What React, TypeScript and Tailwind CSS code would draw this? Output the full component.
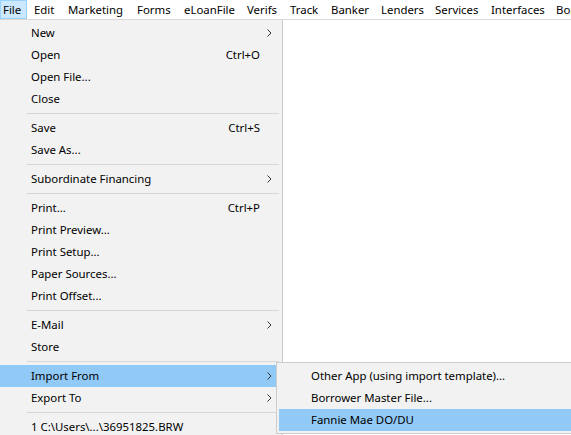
import React from 'react';

type Item =
  | { sep: true }
  | { label: string; shortcut?: string; sub?: boolean; active?: boolean };

// menu bar entries with their cell widths
const bar: [string, string][] = [
  ['File', 'w-[27px]'],
  ['Edit', 'w-[34px]'],
  ['Marketing', 'w-[69px]'],
  ['Forms', 'w-[47px]'],
  ['eLoanFile', 'w-[63px]'],
  ['Verifs', 'w-[43px]'],
  ['Track', 'w-[41px]'],
  ['Banker', 'w-[50px]'],
  ['Lenders', 'w-[54px]'],
  ['Services', 'w-[56px]'],
  ['Interfaces', 'w-[65px]'],
  ['Borrower', 'w-[70px]'],
];

const fileMenu: Item[] = [
  { label: 'New', sub: true },
  { label: 'Open', shortcut: 'Ctrl+O' },
  { label: 'Open File...' },
  { label: 'Close' },
  { sep: true },
  { label: 'Save', shortcut: 'Ctrl+S' },
  { label: 'Save As...' },
  { sep: true },
  { label: 'Subordinate Financing', sub: true },
  { sep: true },
  { label: 'Print...', shortcut: 'Ctrl+P' },
  { label: 'Print Preview...' },
  { label: 'Print Setup...' },
  { label: 'Paper Sources...' },
  { label: 'Print Offset...' },
  { sep: true },
  { label: 'E-Mail', sub: true },
  { label: 'Store' },
  { sep: true },
  { label: 'Import From', sub: true, active: true },
  { label: 'Export To', sub: true },
  { sep: true },
  { label: '1 C:\\Users\\...\\36951825.BRW' },
];

const importMenu = [
  { label: 'Other App (using import template)...' },
  { label: 'Borrower Master File...' },
  { label: 'Fannie Mae DO/DU', active: true },
];

function Chevron() {
  return (
    <svg width="5" height="8" viewBox="0 0 5 8" className="block">
      <path d="M0.5 0.5 L4 4 L0.5 7.5" fill="none" stroke="#333" strokeWidth="1" />
    </svg>
  );
}

function Separator() {
  return (
    <div className="h-[7px] flex items-center ml-[27px] mr-[3px]">
      <div className="h-px w-full bg-[#d7d7d7]" />
    </div>
  );
}

export default function App() {
  return (
    <div className="relative w-[571px] h-[435px] overflow-hidden bg-white text-[11.4px] text-black font-['Noto_Sans',sans-serif] leading-none">
      {/* menu bar */}
      <div className="flex h-[20px] border-b border-[#d9d9d9] whitespace-nowrap">
        {bar.map(([b, w], i) => (
          <div
            key={b}
            className={
              i === 0
                ? `${w} shrink-0 h-[19px] pl-[2px] flex items-center bg-[#cce8ff] border border-[#99d1ff]`
                : `${w} shrink-0 h-[19px] pl-[7px] flex items-center`
            }
          >
            {b}
          </div>
        ))}
      </div>

      {/* File dropdown */}
      <div className="absolute left-0 top-[20px] w-[283px] bg-[#f2f2f2] border-r border-b border-[#cccccc] pt-[2px] pb-[2px]">
        {fileMenu.map((it, i) =>
          'sep' in it ? (
            <Separator key={i} />
          ) : (
            <div
              key={i}
              className={`h-[22px] flex items-center pl-[31px] whitespace-nowrap ${it.active ? 'bg-[#91c9f7]' : ''}`}
            >
              <span className="flex-1">{it.label}</span>
              {it.shortcut && <span>{it.shortcut}</span>}
              <span className="w-[22px] flex items-center pl-[7px]">{it.sub && <Chevron />}</span>
            </div>
          )
        )}
      </div>

      {/* Import From submenu */}
      <div className="absolute left-[276px] top-[362px] w-[310px] bg-[#f2f2f2] border border-[#cccccc] px-[2px] pt-[2px] pb-[2px]">
        {importMenu.map((it) => (
          <div
            key={it.label}
            className={`h-[22px] flex items-center pl-[32px] whitespace-nowrap ${it.active ? 'bg-[#91c9f7]' : ''}`}
          >
            {it.label}
          </div>
        ))}
      </div>
    </div>
  );
}
